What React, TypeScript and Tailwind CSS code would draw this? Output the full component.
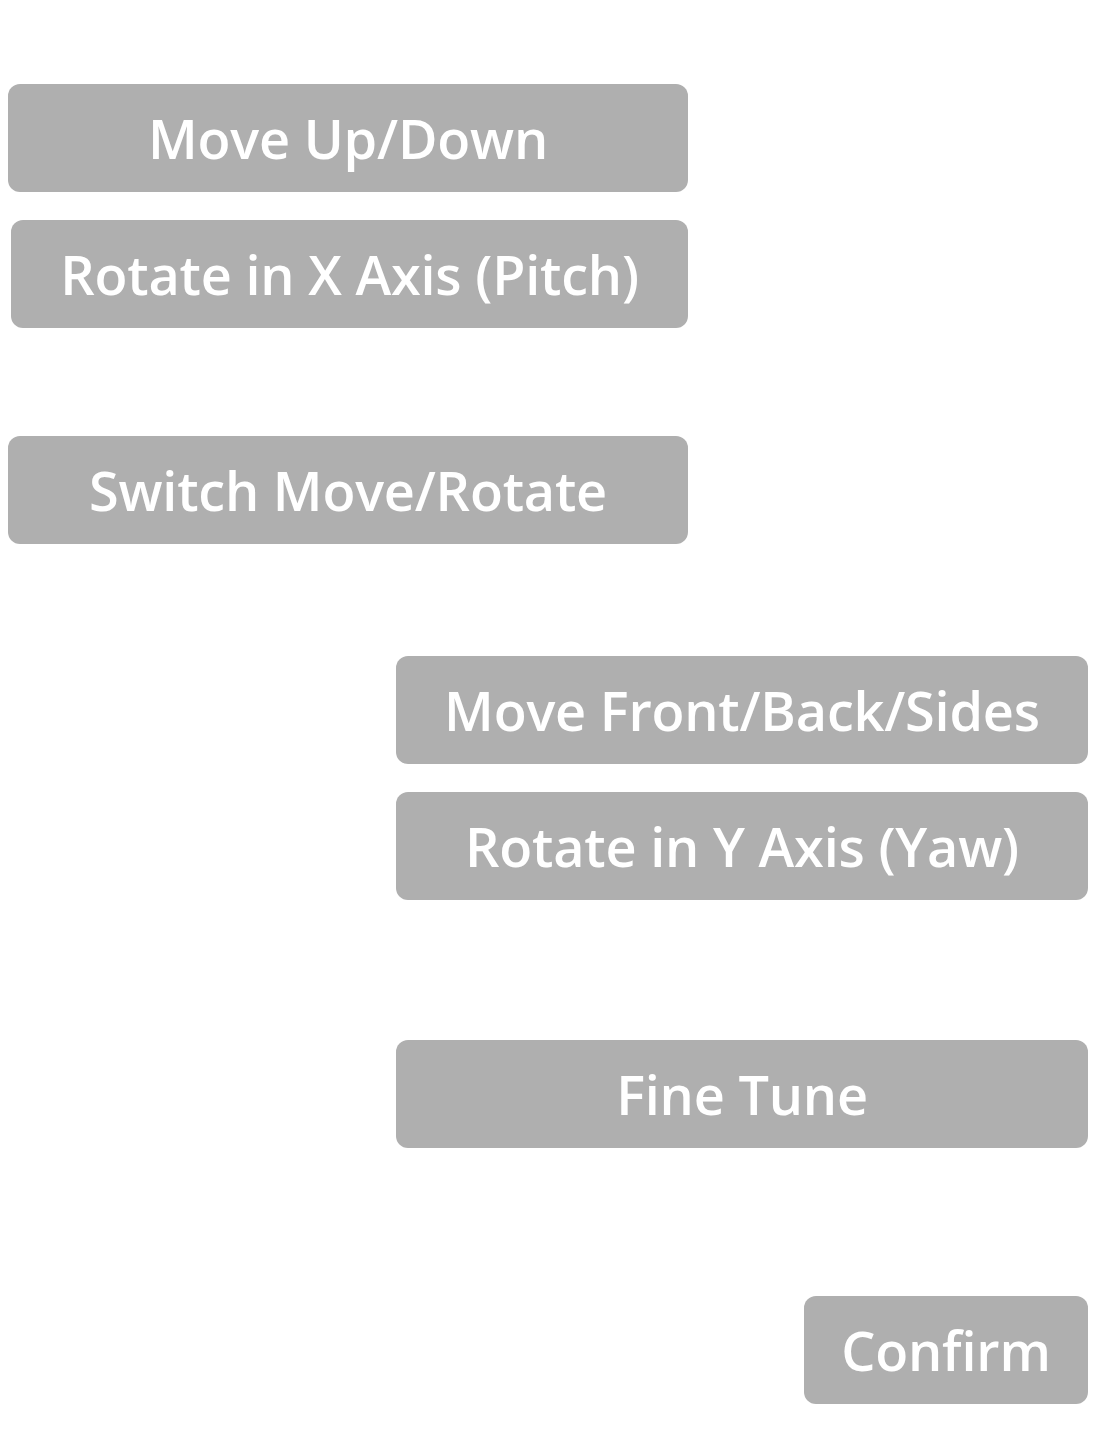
const font = { fontFamily: '"Open Sans", "Noto Sans", sans-serif' }

function Btn({ label, className }: { label: string; className: string }) {
  return (
    <button
      className={`h-[108px] rounded-[12px] bg-[#afafaf] text-white text-[54px] font-semibold leading-none flex items-center justify-center tracking-[-0.2px] ${className}`}
    >
      {label}
    </button>
  )
}

export default function App() {
  return (
    <div className="w-[1096px] h-[1452px] bg-white flex flex-col pt-[84px]" style={font}>
      <Btn label="Move Up/Down" className="ml-[8px] w-[680px]" />
      <Btn label="Rotate in X Axis (Pitch)" className="ml-[11px] w-[677px] mt-[28px]" />
      <Btn label="Switch Move/Rotate" className="ml-[8px] w-[680px] mt-[108px]" />
      <Btn label="Move Front/Back/Sides" className="ml-[396px] w-[692px] mt-[112px]" />
      <Btn label="Rotate in Y Axis (Yaw)" className="ml-[396px] w-[692px] mt-[28px]" />
      <Btn label="Fine Tune" className="ml-[396px] w-[692px] mt-[140px]" />
      <Btn label="Confirm" className="ml-[804px] w-[284px] mt-[148px]" />
    </div>
  )
}
